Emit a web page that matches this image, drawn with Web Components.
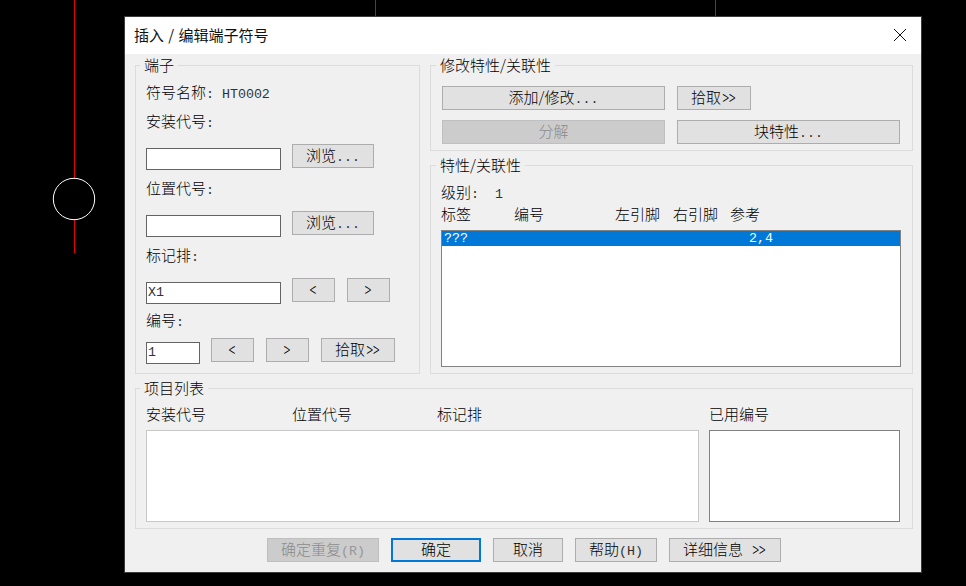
<!DOCTYPE html>
<html lang="zh">
<head>
<meta charset="utf-8">
<title>插入 / 编辑端子符号</title>
<style>
  html, body { margin: 0; height: 100%; background: #000; overflow: hidden; }
  body { font: 15px "Noto Sans CJK SC", sans-serif; color: #000; }
</style>
</head>
<body>
<cad-desktop>
  <cad-window heading="插入 / 编辑端子符号">
    <terminal-group></terminal-group>
    <properties-groups></properties-groups>
    <project-group></project-group>
    <dialog-actions></dialog-actions>
  </cad-window>
</cad-desktop>

<script>
const FONT = `"Noto Sans CJK SC", sans-serif`;
const MONO = `"Liberation Mono", "Noto Sans CJK SC", monospace`;

class CadDesktop extends HTMLElement {
  constructor() {
    super();
    this.attachShadow({mode: 'open'});
    this.shadowRoot.innerHTML = `
      <style>
        :host { display: block; position: relative; width: 966px; height: 586px; background: #000; overflow: hidden; }
        svg { position: absolute; left: 0; top: 0; }
        ::slotted(*) { position: absolute; left: 125px; top: 17px; }
      </style>
      <svg width="966" height="586" viewBox="0 0 966 586">
        <path d="M74.5 0V178M74.5 220V253M375.5 0V17M715.5 0V17" stroke="#e60000" stroke-width="1" fill="none"/>
        <circle cx="74" cy="199" r="20.7" stroke="#fff" stroke-width="1" fill="none"/>
      </svg>
      <slot></slot>
    `;
  }
}

class CadWindow extends HTMLElement {
  constructor() {
    super();
    this.attachShadow({mode: 'open'});
    this.shadowRoot.innerHTML = `
      <style>
        :host { display: block; width: 796px; height: 555px; background: #f0f0f0; box-shadow: 0 0 0 1px #3c3c3c; font: 15px ${FONT}; }
        header { height: 36px; padding: 0 15px 1px 9px; background: #fff; display: flex; align-items: center; justify-content: space-between; }
        h1 { margin: 0 0 2px; font: 400 15px ${FONT}; word-spacing: 1px; color: #111; }
        svg { display: block; }
        main { display: grid; grid-template-columns: 285px 483px; grid-template-rows: 309px 141px 24px; column-gap: 10px; row-gap: 14px; padding: 11px 0 0 10px; }
      </style>
      <header>
        <h1></h1>
        <svg width="12" height="12" viewBox="0 0 12 12"><path d="M0 0L12 12M12 0L0 12" stroke="#111" stroke-width="1" fill="none"/></svg>
      </header>
      <main><slot></slot></main>
    `;
    this.shadowRoot.querySelector('h1').textContent = this.getAttribute('heading');
  }
}

class CadGroup extends HTMLElement {
  constructor() {
    super();
    this.attachShadow({mode: 'open'});
    this.shadowRoot.innerHTML = `
      <style>
        :host { display: block; position: relative; box-sizing: border-box; border: 1px solid #dcdcdc; padding-left: 10px; }
        span { position: absolute; left: var(--legend-left, 4px); top: -11px; height: 20px; line-height: 20px; padding: 0 4px; background: #f0f0f0; font-weight: 300; }
      </style>
      <span></span>
      <slot></slot>
    `;
    this.shadowRoot.querySelector('span').textContent = this.getAttribute('legend');
  }
}

// half width text, like the dialog's own latin glyphs
class CadLatin extends HTMLElement {
  constructor() {
    super();
    this.attachShadow({mode: 'open'});
    this.shadowRoot.innerHTML = `<style>:host { display: inline; font-family: ${MONO}; font-size: 13.3px; font-weight: 400; white-space: pre; opacity: .8; }</style><slot></slot>`;
  }
}

// the thin tall < > of the buttons
class CadArrow extends HTMLElement {
  constructor() {
    super();
    this.attachShadow({mode: 'open'});
    this.shadowRoot.innerHTML = `<style>:host { display: inline-block; font-weight: 200; transform: scale(.8, 1.3); }</style><slot></slot>`;
  }
}

class CadButton extends HTMLElement {
  constructor() {
    super();
    this.attachShadow({mode: 'open'});
    this.shadowRoot.innerHTML = `<style>
        :host { display: flex; box-sizing: border-box; height: 24px; flex: none; align-items: center; justify-content: center; padding-bottom: 4px; background: #e1e1e1; border: 1px solid #adadad; font-weight: 300; white-space: nowrap; }
        :host([disabled]) { background: #cccccc; border-color: #bfbfbf; color: #8a8a8a; }
        :host([primary]) { border: 2px solid #0078d7; }
      </style><div><slot></slot></div>`;
    this.style.width = this.getAttribute('w') + 'px';
  }
}

class CadField extends HTMLElement {
  constructor() {
    super();
    this.attachShadow({mode: 'open'});
    this.shadowRoot.innerHTML = `
      <style>
        :host { display: block; box-sizing: border-box; height: 22px; flex: none; margin-top: 4px; padding: 0 1px; background: #fff; border: 1px solid #646464; color: #333; font: 13.3px/20px ${MONO}; }
      </style>
      <slot></slot>
    `;
    this.style.width = this.getAttribute('w') + 'px';
  }
}

class CadListbox extends HTMLElement {
  constructor() {
    super();
    this.attachShadow({mode: 'open'});
    this.shadowRoot.innerHTML = `
      <style>
        :host { display: block; box-sizing: border-box; background: #fff; border: 1px solid #828282; }
        :host([quiet]) { border-color: #c8c8c8; }
      </style>
      <slot></slot>
    `;
  }
}

class TerminalGroup extends HTMLElement {
  constructor() {
    super();
    this.attachShadow({mode: 'open'});
    this.shadowRoot.innerHTML = `
      <style>
        :host { display: block; }
        cad-group { height: 100%; box-sizing: border-box; }
        .label { height: 20px; line-height: 18px; font-weight: 300; }
        .row { display: flex; align-items: flex-start; gap: 11px; margin-top: 12px; }
        .row + .label { margin-top: 9px; }
        .first { margin-top: 17px; }
        .second { margin-top: 9px !important; }
        .num { margin-top: 7px !important; }
        .num + .row { margin-top: 7px; }
      </style>
      <cad-group legend="端子">
        <div class="label first">符号名称<cad-latin>: HT0002</cad-latin></div>
        <div class="label second">安装代号<cad-latin>:</cad-latin></div>
        <div class="row"><cad-field w="135"></cad-field><cad-button w="82">浏览<cad-latin>...</cad-latin></cad-button></div>
        <div class="label">位置代号<cad-latin>:</cad-latin></div>
        <div class="row"><cad-field w="135"></cad-field><cad-button w="82">浏览<cad-latin>...</cad-latin></cad-button></div>
        <div class="label">标记排<cad-latin>:</cad-latin></div>
        <div class="row"><cad-field w="135">X1</cad-field><cad-button w="43"><cad-arrow>&lt;</cad-arrow></cad-button><cad-button w="43" style="margin-left:1px"><cad-arrow>&gt;</cad-arrow></cad-button></div>
        <div class="label num">编号<cad-latin>:</cad-latin></div>
        <div class="row"><cad-field w="54">1</cad-field><cad-button w="43"><cad-arrow>&lt;</cad-arrow></cad-button><cad-button w="43" style="margin-left:1px"><cad-arrow>&gt;</cad-arrow></cad-button><cad-button w="74" style="margin-left:1px">拾取<cad-arrow>&gt;&gt;</cad-arrow></cad-button></div>
      </cad-group>
    `;
  }
}

class PropertiesGroups extends HTMLElement {
  constructor() {
    super();
    this.attachShadow({mode: 'open'});
    this.shadowRoot.innerHTML = `
      <style>
        :host { display: flex; flex-direction: column; gap: 14px; --legend-left: 5px; }
        .edit { height: 86px; padding: 20px 0 0 11px; }
        .buttons { display: grid; grid-template-columns: 223px auto; justify-content: start; column-gap: 12px; row-gap: 10px; }
        .props { height: 209px; }
        .level { height: 20px; line-height: 18px; margin-top: 17px; font-weight: 300; }
        .heads { display: grid; grid-template-columns: 73px 101px 58px 57px auto; height: 20px; line-height: 18px; margin-top: 2px; font-weight: 300; }
        cad-listbox { width: 460px; height: 137px; margin-top: 5px; }
        .row { display: flex; height: 15px; background: #0078d7; color: #fff; font: 13.3px/15px ${MONO}; padding-left: 2px; }
        .row span:last-child { margin-left: 281px; }
      </style>
      <cad-group legend="修改特性/关联性" class="edit">
        <div class="buttons">
          <cad-button w="223">添加/修改<cad-latin>...</cad-latin></cad-button><cad-button w="74">拾取<cad-arrow>&gt;&gt;</cad-arrow></cad-button>
          <cad-button w="223" disabled>分解</cad-button><cad-button w="223">块特性<cad-latin>...</cad-latin></cad-button>
        </div>
      </cad-group>
      <cad-group legend="特性/关联性" class="props">
        <div class="level">级别<cad-latin>:  1</cad-latin></div>
        <div class="heads"><span>标签</span><span>编号</span><span>左引脚</span><span>右引脚</span><span>参考</span></div>
        <cad-listbox><div class="row"><span>???</span><span>2,4</span></div></cad-listbox>
      </cad-group>
    `;
  }
}

class ProjectGroup extends HTMLElement {
  constructor() {
    super();
    this.attachShadow({mode: 'open'});
    this.shadowRoot.innerHTML = `
      <style>
        :host { display: block; grid-column: 1 / 3; }
        cad-group { height: 100%; box-sizing: border-box; }
        .heads { display: grid; grid-template-columns: 146px 145px 272px auto; height: 20px; line-height: 18px; margin-top: 16px; font-weight: 300; }
        .lists { display: flex; gap: 10px; margin-top: 5px; }
        .main { width: 553px; height: 92px; }
        .used { width: 191px; height: 92px; }
      </style>
      <cad-group legend="项目列表">
        <div class="heads"><span>安装代号</span><span>位置代号</span><span>标记排</span><span>已用编号</span></div>
        <div class="lists"><cad-listbox class="main" quiet></cad-listbox><cad-listbox class="used"></cad-listbox></div>
      </cad-group>
    `;
  }
}

class DialogActions extends HTMLElement {
  constructor() {
    super();
    this.attachShadow({mode: 'open'});
    this.shadowRoot.innerHTML = `
      <style>
        :host { display: flex; grid-column: 1 / 3; gap: 12px; margin-top: -5px; padding-left: 132px; }
      </style>
      <cad-button w="112" disabled>确定重复<cad-latin>(R)</cad-latin></cad-button>
      <cad-button w="90" primary>确定</cad-button>
      <cad-button w="70">取消</cad-button>
      <cad-button w="82">帮助<cad-latin>(H)</cad-latin></cad-button>
      <cad-button w="112">详细信息<cad-latin> </cad-latin><cad-arrow>&gt;&gt;</cad-arrow></cad-button>
    `;
  }
}

customElements.define('cad-desktop', CadDesktop);
customElements.define('cad-window', CadWindow);
customElements.define('cad-group', CadGroup);
customElements.define('cad-latin', CadLatin);
customElements.define('cad-arrow', CadArrow);
customElements.define('cad-button', CadButton);
customElements.define('cad-field', CadField);
customElements.define('cad-listbox', CadListbox);
customElements.define('terminal-group', TerminalGroup);
customElements.define('properties-groups', PropertiesGroups);
customElements.define('project-group', ProjectGroup);
customElements.define('dialog-actions', DialogActions);
</script>
</body>
</html>
